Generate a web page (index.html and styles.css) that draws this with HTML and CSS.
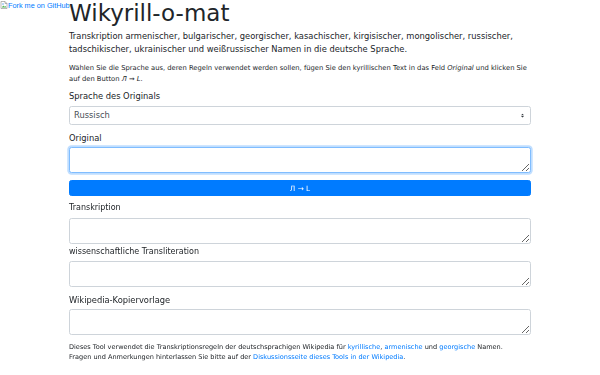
FILE: index.html
```html
<!DOCTYPE html>
<html>
<head>
    <title>Wikyrill-o-mat</title>
    <meta charset="utf-8">
    <link rel="stylesheet" href="styles.css">
</head>
<body>
    <a class="fork" href="#">
        <svg class="fork-icon" width="8" height="8" viewBox="0 0 16 16">
            <path d="M2 1h8l4 4v10H2z" fill="#fff" stroke="#8a8a8a" stroke-width="1.2"/>
            <path d="M10 1v4h4" fill="none" stroke="#8a8a8a" stroke-width="1.2"/>
            <path d="M3.5 13l3-4 2 2.5 2-1.5 2.5 3z" fill="#4caf50"/>
            <circle cx="6" cy="6" r="1.4" fill="#3d8ee8"/>
        </svg>Fork me on GitHub</a>

    <div class="container">
        <h1>Wikyrill-o-mat</h1>
        <p class="lead">Transkription armenischer, bulgarischer, georgischer, kasachischer, kirgisischer, mongolischer, russischer, tadschikischer, ukrainischer und weißrussischer Namen in die deutsche Sprache.</p>
        <p class="hint">Wählen Sie die Sprache aus, deren Regeln verwendet werden sollen, fügen Sie den kyrillischen Text in das Feld <em>Original</em> und klicken Sie auf den Button <em>Л → L</em>.</p>

        <form id="convertForm">
            <div class="form-group">
                <label for="language">Sprache des Originals</label>
                <select id="language" class="custom-select">
                    <option>Russisch</option>
                    <option>Armenisch</option>
                    <option>Bulgarisch</option>
                    <option>Georgisch</option>
                    <option>Kasachisch</option>
                    <option>Kirgisisch</option>
                    <option>Mongolisch</option>
                    <option>Tadschikisch</option>
                    <option>Ukrainisch</option>
                    <option>Weißrussisch</option>
                </select>
            </div>
            <div class="form-group">
                <label for="original">Original</label>
                <textarea id="original" class="form-control is-focus" autofocus></textarea>
            </div>
            <button type="submit" class="btn">Л → L</button>

            <div class="form-group tight">
                <label for="transcription" class="small-label">Transkription</label>
                <textarea id="transcription" class="form-control" readonly></textarea>
            </div>
            <div class="form-group">
                <label for="transliteration" class="small-label">wissenschaftliche Transliteration</label>
                <textarea id="transliteration" class="form-control" readonly></textarea>
            </div>
            <div class="form-group">
                <label for="template">Wikipedia-Kopiervorlage</label>
                <textarea id="template" class="form-control" readonly></textarea>
            </div>
        </form>

        <p class="footer">Dieses Tool verwendet die Transkriptionsregeln der deutschsprachigen Wikipedia für <a href="#">kyrillische</a>, <a href="#">armenische</a> und <a href="#">georgische</a> Namen.<br>
        Fragen und Anmerkungen hinterlassen Sie bitte auf der <a href="#">Diskussionsseite dieses Tools in der Wikipedia</a>.</p>
    </div>
</body>
</html>
```
FILE: styles.css
```css
body {
    margin: 0;
    font-family: "DejaVu Sans", sans-serif;
    font-size: 8.33px;
    line-height: 1.5;
    color: #212529;
    background: #fff;
}
a {
    color: #007bff;
    text-decoration: none;
}
.fork {
    position: absolute;
    top: 0;
    left: 0;
    display: flex;
    align-items: flex-start;
    font-family: "Liberation Sans", Arial, sans-serif;
    font-size: 7.3px;
    line-height: 9px;
    padding-top: 1px;
}
.container {
    max-width: 462px;
    margin: 0 auto;
}
h1 {
    font-size: 23px;
    font-weight: normal;
    line-height: 26px;
    margin: 0 0 4px;
}
p {
    margin: 0;
}
.lead {
    line-height: 13px;
    margin-bottom: 7px;
}
.hint {
    font-size: 6.78px;
    line-height: 10.5px;
    margin-bottom: 6px;
}
.form-group {
    margin-bottom: 6.5px;
}
.form-group.tight {
    margin-bottom: 1.5px;
}
label {
    display: block;
    line-height: 12.5px;
    margin-bottom: 3.2px;
}
.small-label {
    font-size: 8px;
}
.custom-select,
.form-control {
    display: block;
    width: 100%;
    box-sizing: border-box;
    font-family: inherit;
    font-size: 8.33px;
    color: #495057;
    background-color: #fff;
    border: 1px solid #ced4da;
    border-radius: 2.5px;
    margin: 0;
}
.custom-select {
    height: 19.5px;
    padding: 0 12px 0 4px;
    -webkit-appearance: none;
    appearance: none;
    background-image: url("data:image/svg+xml,%3csvg xmlns='http://www.w3.org/2000/svg' width='4' height='5' viewBox='0 0 4 5'%3e%3cpath fill='%23343a40' d='M2 0L0 2h4zm0 5L0 3h4z'/%3e%3c/svg%3e");
    background-repeat: no-repeat;
    background-position: right 6px center;
    background-size: 3px 5px;
}
.form-control {
    height: 26px;
    padding: 2px 4px;
    resize: vertical;
    outline: none;
}
.form-control.is-focus,
.form-control:focus {
    border-color: #80bdff;
    box-shadow: 0 0 0 1.7px rgba(0, 123, 255, 0.25);
}
#original {
    height: 25.6px;
    margin-bottom: 6.7px;
}
.btn {
    display: block;
    width: 100%;
    height: 16.7px;
    padding: 0;
    margin: 0 0 6px;
    font-family: inherit;
    font-size: 7.3px;
    color: #fff;
    background-color: #007bff;
    border: 1px solid #007bff;
    border-radius: 2.5px;
    cursor: pointer;
}
.footer {
    font-size: 6.55px;
    line-height: 10px;
    margin-top: 7px;
}
```
